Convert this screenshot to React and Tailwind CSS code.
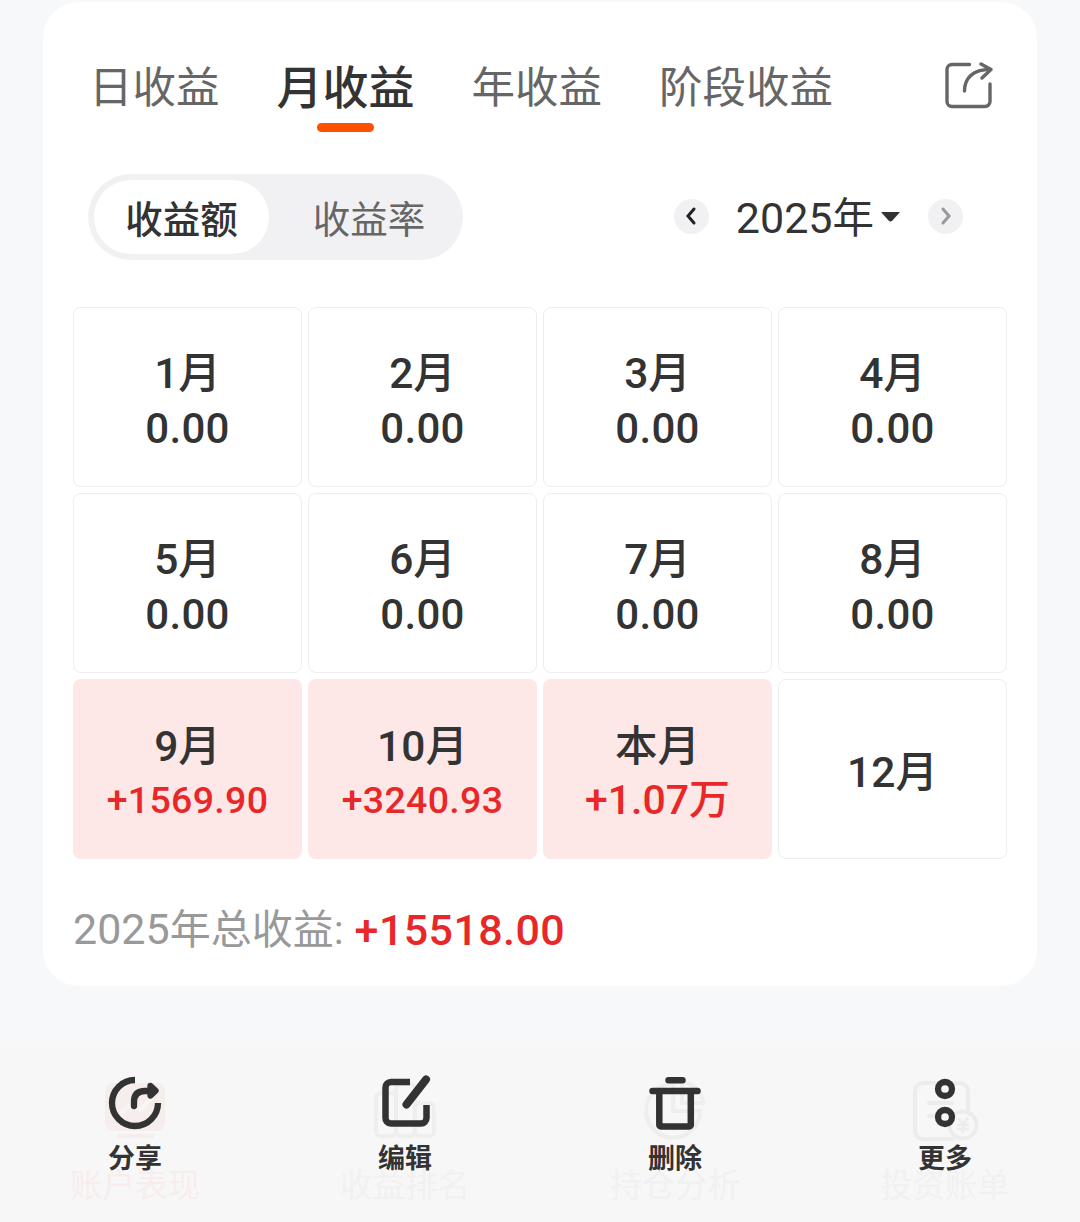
const months = [
  { label: '1月', value: '0.00' },
  { label: '2月', value: '0.00' },
  { label: '3月', value: '0.00' },
  { label: '4月', value: '0.00' },
  { label: '5月', value: '0.00' },
  { label: '6月', value: '0.00' },
  { label: '7月', value: '0.00' },
  { label: '8月', value: '0.00' },
  { label: '9月', value: '+1569.90', gain: true },
  { label: '10月', value: '+3240.93', gain: true },
  { label: '本月', value: '+1.07万', gain: true, short: true },
  { label: '12月' },
]

function ExportIcon() {
  return (
    <svg className="w-[50px] h-[50px]" viewBox="0 0 50 50" fill="none" stroke="#666" strokeWidth="3.4" strokeLinecap="round" strokeLinejoin="round">
      <path d="M26.500 4.500H9a5 5 0 0 0-5 5v32a5 5 0 0 0 5 5h33a5 5 0 0 0 5-5V24" />
      <path d="M21.500 31C21.500 18 30 9.500 47 9.500" />
      <path d="M38 4l10 5.500-9 8.500" />
    </svg>
  )
}

function ShareIcon() {
  return (
    <svg className="w-[60px] h-[60px]" viewBox="0 0 60 60" fill="none" stroke="#333" strokeWidth="6.300">
      <path d="M30 7A23 23 0 1 0 53 30" />
      <path d="M29 33v-4q0-11 11-11h6" strokeLinecap="round" />
      <path d="M45.500 13l5 4.800-5 4.700z" fill="#333" strokeLinejoin="round" />
    </svg>
  )
}

function EditIcon() {
  return (
    <svg className="w-[60px] h-[60px]" viewBox="0 0 60 60" fill="none" stroke="#333" strokeWidth="6.500">
      <path d="M35 9H16a5.500 5.500 0 0 0-5.500 5.500v30A5.500 5.500 0 0 0 16 50.500h30a5.500 5.500 0 0 0 5.500-5.500V32" />
      <path d="M31.500 31.500L51 6.500" strokeWidth="8" strokeLinecap="round" />
    </svg>
  )
}

function TrashIcon() {
  return (
    <svg className="w-[60px] h-[60px]" viewBox="0 0 60 60" fill="none" stroke="#333" strokeWidth="6.500" strokeLinecap="round">
      <path d="M23.500 7.300h14M7.500 18h45" />
      <path d="M14.300 19v33a1.500 1.500 0 0 0 1.500 1.500h28.500a1.500 1.500 0 0 0 1.500-1.500V19" />
    </svg>
  )
}

function MoreIcon() {
  return (
    <svg className="w-[60px] h-[60px]" viewBox="0 0 60 60" fill="none" stroke="#333" strokeWidth="6.300">
      <circle cx="30" cy="16" r="7" />
      <circle cx="30" cy="44" r="7" />
    </svg>
  )
}

const actions = [
  { label: '分享', Icon: ShareIcon },
  { label: '编辑', Icon: EditIcon },
  { label: '删除', Icon: TrashIcon },
  { label: '更多', Icon: MoreIcon },
]

// Faded tab bar that shows through the action bar
function FadedTabs() {
  return (
    <div className="absolute inset-x-0 top-[34px] grid grid-cols-4 text-[32.5px] leading-[48px] text-[#f1f1f1]">
      <div className="flex flex-col items-center text-[#f8eded]">
        <svg className="w-[70px] h-[70px]" viewBox="0 0 70 70" fill="none">
          <rect x="5" y="3" width="60" height="48" rx="8" fill="#f6eeed" />
          <path d="M20 34l12-11 8 7 13-13" stroke="#f8f5f5" strokeWidth="4" />
          <path d="M19 56h33" stroke="#f6eeed" strokeWidth="4" strokeLinecap="round" />
        </svg>
        <span className="mt-3">账户表现</span>
      </div>
      <div className="flex flex-col items-center">
        <svg className="w-[70px] h-[70px]" viewBox="0 0 70 70" fill="none" stroke="#eee" strokeWidth="4">
          <rect x="6" y="13" width="20" height="43" rx="5" />
          <rect x="26" y="4" width="19" height="52" rx="5" />
          <rect x="45" y="23" width="19" height="33" rx="5" />
        </svg>
        <span className="mt-3">收益排名</span>
      </div>
      <div className="flex flex-col items-center">
        <svg className="w-[70px] h-[70px]" viewBox="0 0 70 70" fill="none" stroke="#eee" strokeWidth="4">
          <path d="M29 4A27 27 0 1 0 60 31H33V4z" />
          <path d="M42 2A23 23 0 0 1 63 23H42z" />
        </svg>
        <span className="mt-3">持仓分析</span>
      </div>
      <div className="flex flex-col items-center">
        <svg className="w-[70px] h-[70px]" viewBox="0 0 70 70" fill="none" stroke="#ececec" strokeWidth="4">
          <path d="M44 59H13a8 8 0 0 1-8-8V11a8 8 0 0 1 8-8h37a8 8 0 0 1 8 8v20" />
          <path d="M19 23h23M19 36h12" strokeLinecap="round" />
          <circle cx="53" cy="45" r="13.500" />
          <path d="M48 38l5 6 5-6M53 44v9M47 45h12M47 49h12" strokeWidth="2.500" />
        </svg>
        <span className="mt-3">投资账单</span>
      </div>
    </div>
  )
}

export default function App() {
  return (
    <div className="w-[1080px] h-[1222px] overflow-hidden flex flex-col bg-[#f7f8fa] pt-0.5 text-[#333] font-['Roboto','Noto_Sans_CJK_SC',sans-serif]">
      <section className="mx-[43px] h-[984px] shrink-0 rounded-[36px] bg-white px-[30px]">
        <nav className="flex items-start pt-[51px] pl-4 pr-3.5 text-[43.5px] leading-[72px] text-[#666]">
          <div className="flex gap-[57px]">
            <span>日收益</span>
            <div className="flex flex-col items-center text-[46px] leading-[70px] font-medium text-[#333]">
              <span>月收益</span>
              <span className="w-[57px] h-[9px] rounded-full bg-[#ff5000]" />
            </div>
            <span>年收益</span>
            <span>阶段收益</span>
          </div>
          <div className="ml-auto pt-[7px]">
            <ExportIcon />
          </div>
        </nav>

        <div className="mt-[42px] flex items-center justify-between pl-[15px] pr-[44px]">
          <div className="flex w-[375px] h-[86px] rounded-full bg-[#f1f1f4] p-1.5 text-[37.5px] text-center">
            <span className="w-[175px] rounded-full bg-white font-medium leading-[80px]">收益额</span>
            <span className="flex-1 pl-3 text-[#666] leading-[80px]">收益率</span>
          </div>
          <div className="flex items-center">
            <span className="-mt-0.5 flex size-[35px] items-center justify-center rounded-full bg-[#f1f1f4]">
              <svg className="w-3 h-5" viewBox="0 0 12 20" fill="none" stroke="#222" strokeWidth="3" strokeLinecap="round">
                <path d="M9 3L3 10l6 7" />
              </svg>
            </span>
            <span className="ml-[27px] pt-[3px] text-[43px] leading-[60px]">
              2025<span className="text-[41.5px]">年</span>
            </span>
            <svg className="ml-[7px] w-[19px] h-[10px]" viewBox="0 0 19 10">
              <path d="M0 0h19l-7.500 8.500q-2 2-4 0z" fill="#333" />
            </svg>
            <span className="-mt-0.5 ml-7 flex size-[35px] items-center justify-center rounded-full bg-[#f1f1f4]">
              <svg className="w-3 h-5" viewBox="0 0 12 20" fill="none" stroke="#999" strokeWidth="3" strokeLinecap="round">
                <path d="M3 3l6 7-6 7" />
              </svg>
            </span>
          </div>
        </div>

        <div className="mt-[47px] grid grid-cols-4 gap-1.5">
          {months.map((m) => (
            <div
              key={m.label}
              className={`flex h-[180px] flex-col items-center justify-center rounded-lg font-medium ${m.gain ? 'bg-[#fde8e7] pt-1.5' : 'border border-[#eee] pt-2'}`}
            >
              <span className="text-[42.5px] leading-[56px]">{m.label}</span>
              {m.value && (
                <span
                  className={
                    m.gain
                      ? `leading-[50px] text-[#e82828] ${m.short ? 'text-[41px]' : 'text-[37.5px] tracking-[0.3px]'}`
                      : 'text-[42px] leading-[54px] tracking-[0.3px]'
                  }
                >
                  {m.value}
                </span>
              )}
            </div>
          ))}
        </div>

        <div className="mt-10 flex items-center leading-[60px]">
          <span className="text-[43px] text-[#999]">
            2025<span className="text-[41px]">年总收益:</span>
          </span>
          <span className="ml-[11px] text-[43px] font-medium tracking-[0.4px] text-[#e82828]">+15518.00</span>
        </div>
      </section>

      <footer className="relative mt-auto h-[176px] shrink-0 bg-[#f7f7f7]">
        <FadedTabs />
        <div className="relative grid grid-cols-4 pt-[27px]">
          {actions.map(({ label, Icon }) => (
            <div key={label} className="flex flex-col items-center text-[27px] leading-10 font-bold">
              <Icon />
              <span className="mt-1.5">{label}</span>
            </div>
          ))}
        </div>
      </footer>
    </div>
  )
}
